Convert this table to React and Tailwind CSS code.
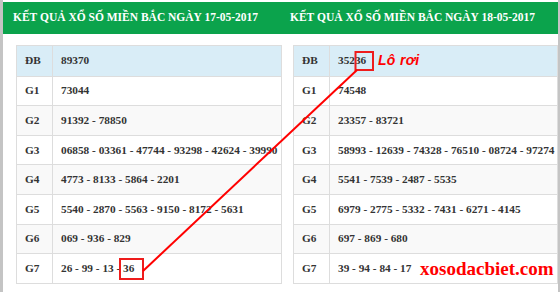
import React from "react";

const left = {
  date: "17-05-2017",
  rows: [
    ["ĐB", "89370"],
    ["G1", "73044"],
    ["G2", "91392 - 78850"],
    ["G3", "06858 - 03361 - 47744 - 93298 - 42624 - 39990"],
    ["G4", "4773 - 8133 - 5864 - 2201"],
    ["G5", "5540 - 2870 - 5563 - 9150 - 8172 - 5631"],
    ["G6", "069 - 936 - 829"],
    ["G7", "26 - 99 - 13 - 36"],
  ],
};

const right = {
  date: "18-05-2017",
  rows: [
    ["ĐB", "35236"],
    ["G1", "74548"],
    ["G2", "23357 - 83721"],
    ["G3", "58993 - 12639 - 74328 - 76510 - 08724 - 97274"],
    ["G4", "5541 - 7539 - 2487 - 5535"],
    ["G5", "6979 - 2775 - 5332 - 7431 - 6271 - 4145"],
    ["G6", "697 - 869 - 680"],
    ["G7", "39 - 94 - 84 - 17"],
  ],
};

function rowBg(i) {
  if (i === 0) return "bg-[#d9edf7]";
  return i % 2 === 0 ? "bg-[#f9f9f9]" : "bg-white";
}

function ResultTable({ data, headerPad, tableMargin, tableWidth }) {
  return (
    <div className="flex flex-col">
      <div className={`h-[32px] bg-[#0ba34c] flex items-center ${headerPad}`}>
        <span className="text-white font-bold text-[11.5px] whitespace-nowrap">
          KẾT QUẢ XỔ SỐ MIỀN BẮC NGÀY {data.date}
        </span>
      </div>
      <div
        className={`mt-[11px] border border-[#dddddd] text-[#333] text-[11.3px] font-bold ${tableMargin} ${tableWidth}`}
      >
        {data.rows.map(([label, value], i) => (
          <div
            key={label}
            className={`flex h-[29.6px] ${i > 0 ? "border-t border-[#dddddd]" : ""} ${rowBg(i)}`}
          >
            <div className="w-[36px] shrink-0 border-r border-[#dddddd] flex items-center pl-[8px]">
              {label}
            </div>
            <div className="flex items-center pl-[8px] whitespace-nowrap">{value}</div>
          </div>
        ))}
      </div>
    </div>
  );
}

export default function App() {
  return (
    <div
      className="relative w-[560px] h-[292px] overflow-hidden bg-white border-l-[3px] border-r-[2px] border-[#c4c4c4] pt-[2px] flex"
      style={{ fontFamily: '"Liberation Serif", "Times New Roman", serif' }}
    >
      <div className="w-[278px] shrink-0">
        <ResultTable
          data={left}
          headerPad="pl-[10px]"
          tableMargin="ml-[13px]"
          tableWidth="w-[266px]"
        />
      </div>
      <div className="w-[277px] shrink-0">
        <ResultTable
          data={right}
          headerPad="pl-[9px]"
          tableMargin="ml-[12px]"
          tableWidth="w-[265px]"
        />
      </div>

      {/* annotation: red boxes + connector */}
      <svg
        className="absolute left-0 top-0 pointer-events-none"
        width="560"
        height="292"
        viewBox="0 0 560 292"
        style={{ left: -3 }}
      >
        <rect x="120" y="259" width="23" height="20" fill="none" stroke="#ee1c1c" strokeWidth="2" />
        <rect x="355.5" y="52" width="17.5" height="18" fill="none" stroke="#ee1c1c" strokeWidth="2" />
        <line x1="143" y1="271" x2="357" y2="70" stroke="#ff0000" strokeWidth="2" />
      </svg>

      <span
        className="absolute top-[50px] left-[375px] text-[14px] font-bold italic text-[#ff0000] tracking-[0.3px]"
        style={{ fontFamily: '"Liberation Sans", Arial, sans-serif' }}
      >
        Lô rơi
      </span>
      <span className="absolute top-[259px] left-[417px] text-[19px] font-bold text-[#ff0000] leading-none">
        xosodacbiet.com
      </span>
    </div>
  );
}
